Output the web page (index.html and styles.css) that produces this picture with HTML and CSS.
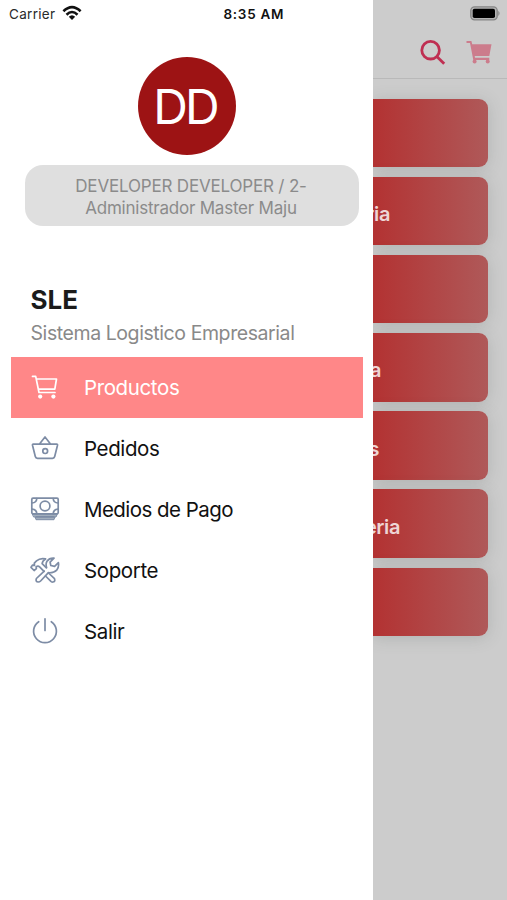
FILE: index.html
```
<!DOCTYPE html>
<html lang="es">
<head>
<meta charset="utf-8">
<title>SLE</title>
<link rel="stylesheet" href="styles.css">
</head>
<body>
<div class="app">
  <aside class="drawer">
    <div class="status">
      <span class="carrier">Carrier</span>
      <svg class="wifi" width="20" height="16" viewBox="0 0 20 16" fill="none" stroke="#111" stroke-width="2.6"><path d="M1.400 6.300Q10 -2.100 18.600 6.300M4.500 9.700Q10 4.300 15.500 9.700"/><path d="M6.800 11.800Q10 8.800 13.200 11.800L10 15.100Z" fill="#111" stroke="none"/></svg>
      <span class="time">8:35 AM</span>
    </div>
    <div class="avatar"><span>DD</span></div>
    <div class="user"><span class="u1">DEVELOPER DEVELOPER / 2-</span><span class="u2">Administrador Master Maju</span></div>
    <h1>SLE</h1>
    <p class="subtitle">Sistema Logistico Empresarial</p>
    <nav>
      <a class="item active">
        <svg width="30" height="30" viewBox="0 0 30 30"><path d="M2.500 4.400H5.700L9 20.500H25M6.600 7H26.500L24.800 17.200H8.400"/><circle class="fill" cx="10.200" cy="24.600" r="2.100"/><circle class="fill" cx="23.400" cy="24.600" r="2.100"/></svg>
        <span class="t1">Productos</span></a>
      <a class="item">
        <svg width="30" height="30" viewBox="0 0 30 30"><path d="M3.200 11.200H26.800Q27.700 11.200 27.500 12.200L24.700 23.500Q24.300 25.300 22.500 25.300H7.500Q5.700 25.300 5.300 23.500L2.500 12.200Q2.300 11.200 3.200 11.200ZM9.500 11L15 3.900L20.500 11"/><circle cx="15.200" cy="18.100" r="2.400"/></svg>
        <span class="t2">Pedidos</span></a>
      <a class="item">
        <svg width="30" height="30" viewBox="0 0 30 30"><path class="bill" d="M2.700 20H27.300L26 23H24.800L24 25.700H6L5.200 23H4Z"/><rect class="note" x="1.800" y="4.200" width="26.400" height="15.600" rx="1.200"/><circle cx="15" cy="12" r="4.900"/><path d="M2 9Q6.500 8.800 6.800 4.500M28 9Q23.500 8.800 23.200 4.500M2 15.200Q6.500 15.500 6.800 19.600M28 15.200Q23.500 15.500 23.200 19.600M6 22.900H24"/></svg>
        <span class="t3">Medios de Pago</span></a>
      <a class="item">
        <svg width="30" height="30" viewBox="0 0 30 30"><path d="M14.200 16.200L6.400 23.500Q5.300 26.800 8.200 27Q9.600 27 10.600 26L18.400 17.700Q23.800 18.200 26.700 15.200Q29.200 12.300 28.400 7.700L24.600 11.400L20.800 10.500L20.100 7.100L24 3.200Q19.300 2.900 17 6.200Q15.500 8.600 16.500 12.300"/><path d="M16.400 12.900L12.100 8.600Q12.500 5.400 15.600 3.900Q10.200 2.600 6.500 5.900L4.300 8.100L4.500 10.400L2.600 10.100L1 12.300L4.100 15.500L6.400 13.600L6.100 11.700Q8.100 10.500 9.600 11.800L14 16.400M18.500 18L24.500 23.700Q25.500 26.700 22.800 27Q21.500 27.200 20.700 26.200L15.500 21"/></svg>
        <span class="t4">Soporte</span></a>
      <a class="item">
        <svg width="30" height="30" viewBox="0 0 30 30"><path d="M15 2.800V14.500M8.700 5.700A11.400 11.400 0 1 0 21.300 5.700"/></svg>
        <span class="t5">Salir</span></a>
    </nav>
  </aside>
  <main class="page">
    <div class="battery-row"><svg width="31" height="15" viewBox="0 0 31 15"><rect x=".8" y=".8" width="26.400" height="13" rx="3.800" fill="#b4b4b4" stroke="#858585" stroke-width="1.300"/><rect x="2.700" y="2.700" width="22.300" height="9.300" rx="1.800"/><path d="M28.300 4.700Q30.800 7.300 28.300 9.900Z" fill="#858585"/></svg></div>
    <header>
      <svg width="26" height="26" viewBox="0 0 26 26" fill="none" stroke="#bf2f52" stroke-width="2.800"><circle cx="10.600" cy="10.200" r="8.800"/><path d="M16.800 16.400L24.200 23.800"/></svg>
      <svg width="26" height="26" viewBox="0 0 26 26" fill="#cc7c8c"><path d="M.5 1H5.400L6.200 4.200H25.500L23.300 16H8.700L9 17.800H23.300V20H7.300L4 3H.5Z"/><circle cx="8.600" cy="21.500" r="2"/><circle cx="21.700" cy="21.500" r="2"/></svg>
    </header>
    <section class="cards">
      <div class="card"></div>
      <div class="card c2">ria</div>
      <div class="card"></div>
      <div class="card c4">a</div>
      <div class="card c5">s</div>
      <div class="card c6">eria</div>
      <div class="card"></div>
    </section>
  </main>
</div>
</body>
</html>
```
FILE: styles.css
```
* { box-sizing: border-box; }
body { margin: 0; font-family: Inter, "Liberation Sans", sans-serif; color: #111; }
.app { display: grid; grid-template-columns: 372.5px 1fr; width: 507px; height: 900px; overflow: hidden; background: #ccc; }
.drawer { background: #fff; display: flex; flex-direction: column; }
.status { display: flex; align-items: center; height: 28px; padding-left: 9px; font-size: 13.5px; white-space: nowrap; }
.carrier { width: 52.5px; letter-spacing: .3px; color: #2a2a2a; }
.wifi { margin-top: -3px; }
.time { margin-left: 142px; font-weight: 600; letter-spacing: .7px; }
.avatar { width: 98px; height: 98px; margin: 28.5px 0 0 138px; padding: 1px 4px 0 0; border-radius: 50%; background: #9d1314; color: #fff; display: flex; align-items: center; justify-content: center; font-size: 48px; font-weight: 400; letter-spacing: -3px; }
.user { width: 334px; height: 61px; margin: 10.5px 0 0 24.5px; padding: 9.5px 1px 0 0; border-radius: 18px; background: #dfdfdf; color: #8b8b8b; display: flex; flex-direction: column; align-items: center; font-size: 17px; line-height: 22px; white-space: nowrap; }
.u1 { letter-spacing: -.18px; }
.u2 { letter-spacing: -.22px; }
h1 { margin: 58px 0 0 30.5px; font-size: 26px; line-height: 32px; font-weight: 700; color: #1b1b1b; }
.subtitle { margin: 3.5px 0 0 30.5px; font-size: 19.5px; line-height: 26px; letter-spacing: -.42px; color: #898989; white-space: nowrap; }
nav { display: flex; flex-direction: column; margin: 11px 10px 0 10.5px; }
.item { height: 61px; padding-left: 19.5px; display: flex; align-items: center; gap: 24px; font-size: 20.5px; letter-spacing: -.38px; color: #111; white-space: nowrap; }
.item svg { flex: none; margin-top: -1px; fill: none; stroke: #7d8ca5; stroke-width: 1.7; stroke-linejoin: round; stroke-linecap: round; }
.item .bill { fill: #a3afbd; stroke-width: 1; }
.item .note { fill: #fff; }
.t3 { letter-spacing: -.55px; }
.active { background: #ff8788; color: #fff; }
.active svg { stroke: #fff; }
.active .fill { fill: #fff; stroke: none; }
.page { display: flex; flex-direction: column; overflow: hidden; }
.battery-row { height: 28px; display: flex; justify-content: flex-end; padding: 6px 6px 0 0; }
header { height: 51px; border-bottom: 1px solid #b9b9b9; display: flex; justify-content: flex-end; gap: 20px; padding: 12px 15px 0 0; }
.cards { display: flex; flex-direction: column; gap: 9.7px; padding: 19.5px 19px 0 0; }
.card { height: 68.5px; border-radius: 0 9px 9px 0; background: linear-gradient(90deg, #b33232, #af5959); box-shadow: 0 2px 16px rgba(80, 90, 85, .22); color: #eed5d5; font-size: 20px; letter-spacing: -.4px; font-weight: 600; display: flex; align-items: center; justify-content: flex-end; padding-top: 6px; }
.c2 { padding-right: 98px; }
.c4 { padding-right: 107px; }
.c5 { padding-right: 109px; }
.c6 { padding-right: 88px; }
```
